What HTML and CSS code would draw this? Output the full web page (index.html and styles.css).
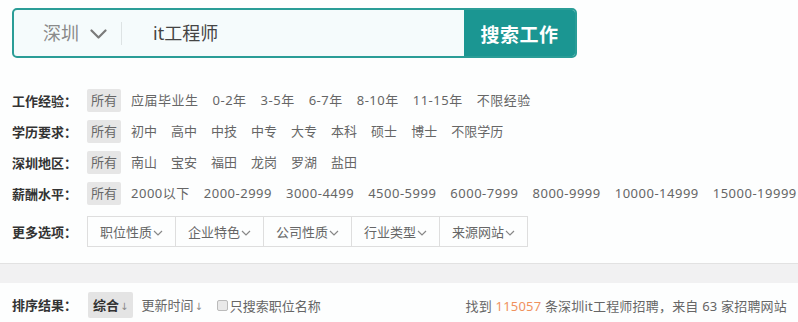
FILE: index.html
```html
<!DOCTYPE html>
<html lang="zh-CN">
<head>
<meta charset="utf-8">
<title>搜索工作</title>
<link rel="stylesheet" href="styles.css">
</head>
<body>
<div class="search-box">
  <div class="city">深圳
    <svg class="city-arrow" width="17" height="10" viewBox="0 0 17 10"><path d="M1.5 1.5 L8.5 8.5 L15.5 1.5" fill="none" stroke="#7a7a7a" stroke-width="2.2" stroke-linecap="round" stroke-linejoin="round"/></svg>
  </div>
  <div class="divider"></div>
  <div class="query">it工程师</div>
  <button class="search-btn">搜索工作</button>
</div>

<div class="filters">
  <div class="row numeric">
    <span class="label">工作经验：</span>
    <span class="item active">所有</span><span class="item">应届毕业生</span><span class="item">0-2年</span><span class="item">3-5年</span><span class="item">6-7年</span><span class="item">8-10年</span><span class="item">11-15年</span><span class="item">不限经验</span>
  </div>
  <div class="row">
    <span class="label">学历要求：</span>
    <span class="item active">所有</span><span class="item">初中</span><span class="item">高中</span><span class="item">中技</span><span class="item">中专</span><span class="item">大专</span><span class="item">本科</span><span class="item">硕士</span><span class="item">博士</span><span class="item">不限学历</span>
  </div>
  <div class="row">
    <span class="label">深圳地区：</span>
    <span class="item active">所有</span><span class="item">南山</span><span class="item">宝安</span><span class="item">福田</span><span class="item">龙岗</span><span class="item">罗湖</span><span class="item">盐田</span>
  </div>
  <div class="row numeric">
    <span class="label">薪酬水平：</span>
    <span class="item active">所有</span><span class="item">2000以下</span><span class="item">2000-2999</span><span class="item">3000-4499</span><span class="item">4500-5999</span><span class="item">6000-7999</span><span class="item">8000-9999</span><span class="item">10000-14999</span><span class="item">15000-19999</span><span class="item">20000以上</span>
  </div>
  <div class="row more">
    <span class="label">更多选项：</span>
    <div class="options">
      <span class="opt">职位性质<svg class="chev" width="10" height="6" viewBox="0 0 10 6"><path d="M1 1 L5 5 L9 1" fill="none" stroke="#888" stroke-width="1.2"/></svg></span>
      <span class="opt">企业特色<svg class="chev" width="10" height="6" viewBox="0 0 10 6"><path d="M1 1 L5 5 L9 1" fill="none" stroke="#888" stroke-width="1.2"/></svg></span>
      <span class="opt">公司性质<svg class="chev" width="10" height="6" viewBox="0 0 10 6"><path d="M1 1 L5 5 L9 1" fill="none" stroke="#888" stroke-width="1.2"/></svg></span>
      <span class="opt">行业类型<svg class="chev" width="10" height="6" viewBox="0 0 10 6"><path d="M1 1 L5 5 L9 1" fill="none" stroke="#888" stroke-width="1.2"/></svg></span>
      <span class="opt">来源网站<svg class="chev" width="10" height="6" viewBox="0 0 10 6"><path d="M1 1 L5 5 L9 1" fill="none" stroke="#888" stroke-width="1.2"/></svg></span>
    </div>
  </div>
</div>

<div class="band"></div>

<div class="sort-row">
  <div class="sort-left">
    <span class="label">排序结果：</span>
    <span class="sort active">综合<span class="arrow">↓&#xFE0E;</span></span>
    <span class="sort">更新时间<span class="arrow">↓&#xFE0E;</span></span>
    <label class="check"><span class="box"></span>只搜索职位名称</label>
  </div>
  <div class="summary">找到 <span class="num">115057</span> 条深圳it工程师招聘，来自 63 家招聘网站</div>
</div>
</body>
</html>
```

FILE: styles.css
```css
* { box-sizing: border-box; }
html, body {
  margin: 0;
  padding: 0;
  background: #fdfefe;
  overflow: hidden;
}
body {
  width: 798px;
  height: 322px;
  font-family: "Noto Sans", "Noto Sans CJK SC", sans-serif;
  color: #666;
  font-size: 13px;
}

/* search */
.search-box {
  margin: 8px 0 0 12px;
  width: 565px;
  height: 50px;
  border: 2.5px solid #2a9d97;
  border-radius: 5px;
  background: #f5fbfc;
  display: flex;
  align-items: center;
  overflow: hidden;
}
.city {
  display: flex;
  align-items: center;
  padding-left: 29px;
  font-size: 18px;
  color: #8a8a8a;
  line-height: 24px;
  gap: 11px;
}
.city-arrow { margin-top: 2px; }
.divider {
  width: 1px;
  height: 23px;
  background: #dde3e4;
  margin-left: 14px;
}
.query {
  flex: 1;
  padding-left: 31px;
  font-size: 18px;
  color: #444;
  line-height: 24px;
}
.search-btn {
  width: 111px;
  height: 100%;
  border: 0;
  margin: 0;
  background: #1b9692;
  color: #fff;
  font-family: "Noto Sans CJK SC", sans-serif;
  font-size: 19px;
  font-weight: 700;
  letter-spacing: 0.5px;
  padding: 0;
}

/* filters */
.filters {
  margin-top: 27px;
  padding-left: 12px;
}
.row {
  display: flex;
  align-items: center;
  height: 31px;
  white-space: nowrap;
  overflow: hidden;
  width: 786px;
}
.label {
  width: 75px;
  flex: none;
  font-weight: 700;
  color: #333;
  font-size: 13px;
  line-height: 20px;
}
.item {
  flex: none;
  padding: 0 4px;
  margin-right: 6px;
  line-height: 23px;
  height: 23px;
  color: #666;
}
.numeric .item { letter-spacing: 0.5px; }
.numeric .item.active { letter-spacing: 0; }
.item.active {
  background: #e6e6e6;
  border-radius: 2px;
}
.row.more {
  margin-top: 7px;
  height: 31px;
}
.options {
  display: flex;
  margin-left: 1px;
}
.opt {
  display: flex;
  align-items: center;
  justify-content: center;
  width: 89px;
  height: 31px;
  border: 1px solid #dedede;
  margin-left: -1px;
  color: #666;
  gap: 1px;
}
.chev { margin-top: 3px; }

/* band */
.band {
  margin-top: 16px;
  height: 20px;
  background: #f1f1f2;
  border-top: 1px solid #e2e2e2;
}

/* sort row */
.sort-row {
  display: flex;
  justify-content: space-between;
  align-items: center;
  height: 44px;
  padding: 0 11px 0 12px;
}
.sort-left {
  display: flex;
  align-items: center;
}
.sort {
  padding: 0 5px;
  height: 26px;
  line-height: 26px;
  margin-right: 3px;
  color: #666;
}
.arrow {
  font-family: "DejaVu Sans", sans-serif;
  font-weight: 400;
  font-size: 10px;
  color: #888;
  margin-left: 1px;
}
.sort.active {
  background: #e4e4e4;
  color: #333;
  font-weight: 700;
  border-radius: 2px;
  margin-left: 1px;
}
.check {
  display: flex;
  align-items: center;
  margin-left: 6px;
  color: #666;
}
.box {
  width: 11px;
  height: 11px;
  border: 1px solid #bbb;
  background: #e9e9e9;
  border-radius: 2px;
  margin-right: 2px;
}
.summary {
  color: #666;
  letter-spacing: 0.2px;
}
.num { color: #f0925e; }
```
